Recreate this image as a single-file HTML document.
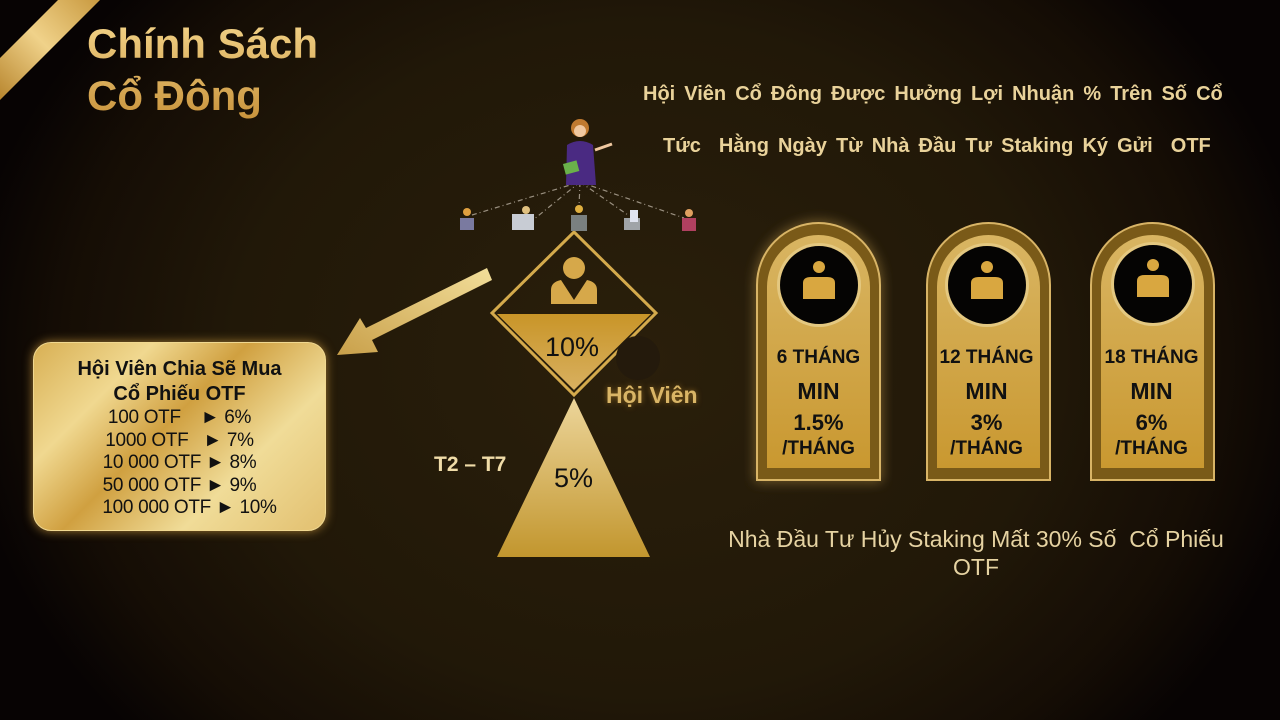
<!DOCTYPE html>
<html><head><meta charset="utf-8"><style>
html,body{margin:0;padding:0}
body{width:1280px;height:720px;overflow:hidden;position:relative;font-family:"Liberation Sans",sans-serif;
background:radial-gradient(ellipse 680px 560px at 640px 360px,#2a1f0b 0%,#211808 60%,#150d05 85%,#070303 100%);}
.t{position:absolute;white-space:nowrap}
.title{left:87px;top:18px;font-size:42px;font-weight:bold;line-height:52px;color:#e6b85c;
background:linear-gradient(180deg,#f3d48a,#c8923a);-webkit-background-clip:text;color:transparent}
.head{color:#e9d29a;font-weight:bold;font-size:20px;word-spacing:3.5px}
.card{position:absolute;font-weight:bold;color:#111;text-align:center;width:123px}
</style></head><body>
<svg width="1280" height="720" style="position:absolute;left:0;top:0">
<defs>
<linearGradient id="rib" x1="0" y1="1" x2="1" y2="0"><stop offset="0" stop-color="#b8862e"/><stop offset=".5" stop-color="#f0d28a"/><stop offset="1" stop-color="#c99a40"/></linearGradient>
<linearGradient id="g1" x1="0" y1="0" x2="0" y2="1"><stop offset="0" stop-color="#c99528"/><stop offset="1" stop-color="#d8b060"/></linearGradient>
<linearGradient id="g2" x1="0" y1="0" x2="0" y2="1"><stop offset="0" stop-color="#ecd59a"/><stop offset="1" stop-color="#c2962e"/></linearGradient>
<linearGradient id="arr" x1="1" y1="0" x2="0" y2="1"><stop offset="0" stop-color="#f2de9a"/><stop offset="1" stop-color="#c9a04a"/></linearGradient>
<linearGradient id="cd" x1="0" y1="0" x2="0" y2="1"><stop offset="0" stop-color="#d9b562"/><stop offset="1" stop-color="#c99830"/></linearGradient>
<filter id="gl"><feGaussianBlur stdDeviation="6"/></filter>
</defs>
<polygon points="0,58 58,0 100,0 0,100" fill="url(#rib)"/>
<polygon points="487,268 492,280 372,340 378,352 337,355 360,318 366,328" fill="url(#arr)"/>
<polygon points="574,232 656,313 574,395 492,313" fill="none" stroke="#d4aa4c" stroke-width="3"/>
<polygon points="497,314 651,314 574,390" fill="url(#g1)"/>
<circle cx="574" cy="268" r="11" fill="#d6a84a"/>
<path d="M551,304 v-14 q0,-8 10,-10 l13,20 l13,-20 q10,2 10,10 v14z" fill="#d6a84a"/>
<circle cx="638" cy="358" r="22" fill="#241a0c"/>
<polygon points="574,398 650,557 497,557" fill="url(#g2)"/>
<g stroke="#9a9080" stroke-width="1.2" stroke-dasharray="5,3,1,3" fill="none">
<line x1="580" y1="182" x2="472" y2="215"/><line x1="580" y1="182" x2="533" y2="220"/><line x1="580" y1="182" x2="579" y2="207"/><line x1="580" y1="182" x2="628" y2="215"/><line x1="580" y1="182" x2="684" y2="218"/>
</g>
<circle cx="580" cy="128" r="9" fill="#c07a30"/><circle cx="580" cy="131" r="6" fill="#f0c8a0"/>
<path d="M567,145 q13,-8 26,0 l3,40 h-30z" fill="#4a2a82"/>
<rect x="564" y="162" width="14" height="11" fill="#6ab04a" transform="rotate(-15 571 167)"/>
<line x1="595" y1="150" x2="612" y2="144" stroke="#f0c8a0" stroke-width="3"/>
<g><rect x="460" y="218" width="14" height="12" fill="#7a7aa0"/><circle cx="467" cy="212" r="4" fill="#e0a040"/>
<rect x="512" y="214" width="22" height="16" fill="#c8ccd4"/><circle cx="526" cy="210" r="4" fill="#e0c080"/>
<rect x="571" y="215" width="16" height="16" fill="#7a8080"/><circle cx="579" cy="209" r="4" fill="#e0b040"/>
<rect x="624" y="218" width="16" height="12" fill="#a0a4a8"/><rect x="630" y="210" width="8" height="12" fill="#e0e4f0"/>
<rect x="682" y="218" width="14" height="13" fill="#b04060"/><circle cx="689" cy="213" r="4" fill="#e0a060"/></g>
<g>
<g transform="translate(757,223)">
<path d="M0,257 V62 A61.5,62 0 0 1 123,62 V257Z" fill="#6a4e14" stroke="#d4b060" stroke-width="2" filter="url(#gl)" opacity=".8"/>
<path d="M0,257 V62 A61.5,62 0 0 1 123,62 V257Z" fill="#7a5a18" stroke="#d8b466" stroke-width="2"/>
<path d="M10,245 V64 A51.5,52 0 0 1 113,64 V245Z" fill="url(#cd)"/>
<circle cx="62" cy="62" r="42" fill="#e4c880"/><circle cx="62" cy="62" r="39" fill="#050403"/>
<circle cx="62" cy="44" r="6" fill="#d9a740"/><path d="M46,76 v-16 q0,-6 8,-6 h16 q8,0 8,6 v16z" fill="#d9a740"/>
</g>
<g transform="translate(927,223)">
<path d="M0,257 V62 A61.5,62 0 0 1 123,62 V257Z" fill="#7a5a18" stroke="#d8b466" stroke-width="2"/>
<path d="M10,245 V64 A51.5,52 0 0 1 113,64 V245Z" fill="url(#cd)"/>
<circle cx="60" cy="62" r="42" fill="#e4c880"/><circle cx="60" cy="62" r="39" fill="#050403"/>
<circle cx="60" cy="44" r="6" fill="#d9a740"/><path d="M44,76 v-16 q0,-6 8,-6 h16 q8,0 8,6 v16z" fill="#d9a740"/>
</g>
<g transform="translate(1091,223)">
<path d="M0,257 V62 A61.5,62 0 0 1 123,62 V257Z" fill="#7a5a18" stroke="#d8b466" stroke-width="2"/>
<path d="M10,245 V64 A51.5,52 0 0 1 113,64 V245Z" fill="url(#cd)"/>
<circle cx="62" cy="61" r="42" fill="#e4c880"/><circle cx="62" cy="61" r="39" fill="#050403"/>
<circle cx="62" cy="42" r="6" fill="#d9a740"/><path d="M46,74 v-16 q0,-6 8,-6 h16 q8,0 8,6 v16z" fill="#d9a740"/>
</g>
</g>
</svg>
<div class="t title">Chính Sách<br>Cổ Đông</div>
<div class="t head" style="left:643px;top:83px">Hội Viên Cổ Đông Được Hưởng Lợi Nhuận % Trên Số Cổ</div>
<div class="t head" style="left:663px;top:135px">Tức&nbsp; Hằng Ngày Từ Nhà Đầu Tư Staking Ký Gửi&nbsp; OTF</div>
<div class="t" style="left:545px;top:332px;font-size:27px;color:#111">10%</div>
<div class="t" style="left:554px;top:463px;font-size:27px;color:#111">5%</div>
<div class="t" style="left:606px;top:382px;font-size:23px;font-weight:bold;color:#d9b566;text-shadow:0 0 6px #8a6420">Hội Viên</div>
<div class="t" style="left:434px;top:453px;font-size:21px;font-weight:bold;color:#f0dca8">T2 – T7</div>
<div style="position:absolute;left:33px;top:342px;width:293px;height:189px;border-radius:18px;border:1px solid #f0d890;box-shadow:0 0 10px #a07830;
background:linear-gradient(135deg,#d8b054 0%,#f0d890 25%,#d0a040 45%,#f0dc98 70%,#e2c070 100%);text-align:center;color:#111;font-size:19px;line-height:22.5px;box-sizing:border-box;padding-top:14px">
<b style="font-size:20px;line-height:25px">Hội Viên Chia Sẽ Mua<br>Cổ Phiếu OTF</b>
<div style="font-size:19px;letter-spacing:-0.3px">100 OTF&nbsp;&nbsp;&nbsp; ► 6%<br>1000 OTF&nbsp;&nbsp; ► 7%<br>10 000 OTF ► 8%<br>50 000 OTF ► 9%<br>&nbsp;&nbsp;&nbsp;&nbsp;100 000 OTF ► 10%</div>
</div>
<div class="card" style="left:757px;top:347px;font-size:19px;line-height:22px">6 THÁNG<div style="font-size:23px;margin-top:11px">MIN</div><div style="font-size:22px;margin-top:10px">1.5%</div><div style="font-size:19px;margin-top:4px">/THÁNG</div></div>
<div class="card" style="left:925px;top:347px;font-size:19px;line-height:22px">12 THÁNG<div style="font-size:23px;margin-top:11px">MIN</div><div style="font-size:22px;margin-top:10px">3%</div><div style="font-size:19px;margin-top:4px">/THÁNG</div></div>
<div class="card" style="left:1090px;top:347px;font-size:19px;line-height:22px">18 THÁNG<div style="font-size:23px;margin-top:11px">MIN</div><div style="font-size:22px;margin-top:10px">6%</div><div style="font-size:19px;margin-top:4px">/THÁNG</div></div>
<div class="t" style="left:711px;top:525px;width:530px;text-align:center;white-space:normal;font-size:23px;line-height:28px;color:#e6d3a2">Nhà Đầu Tư Hủy Staking Mất 30% Số&nbsp; Cổ Phiếu OTF</div>
</body></html>
